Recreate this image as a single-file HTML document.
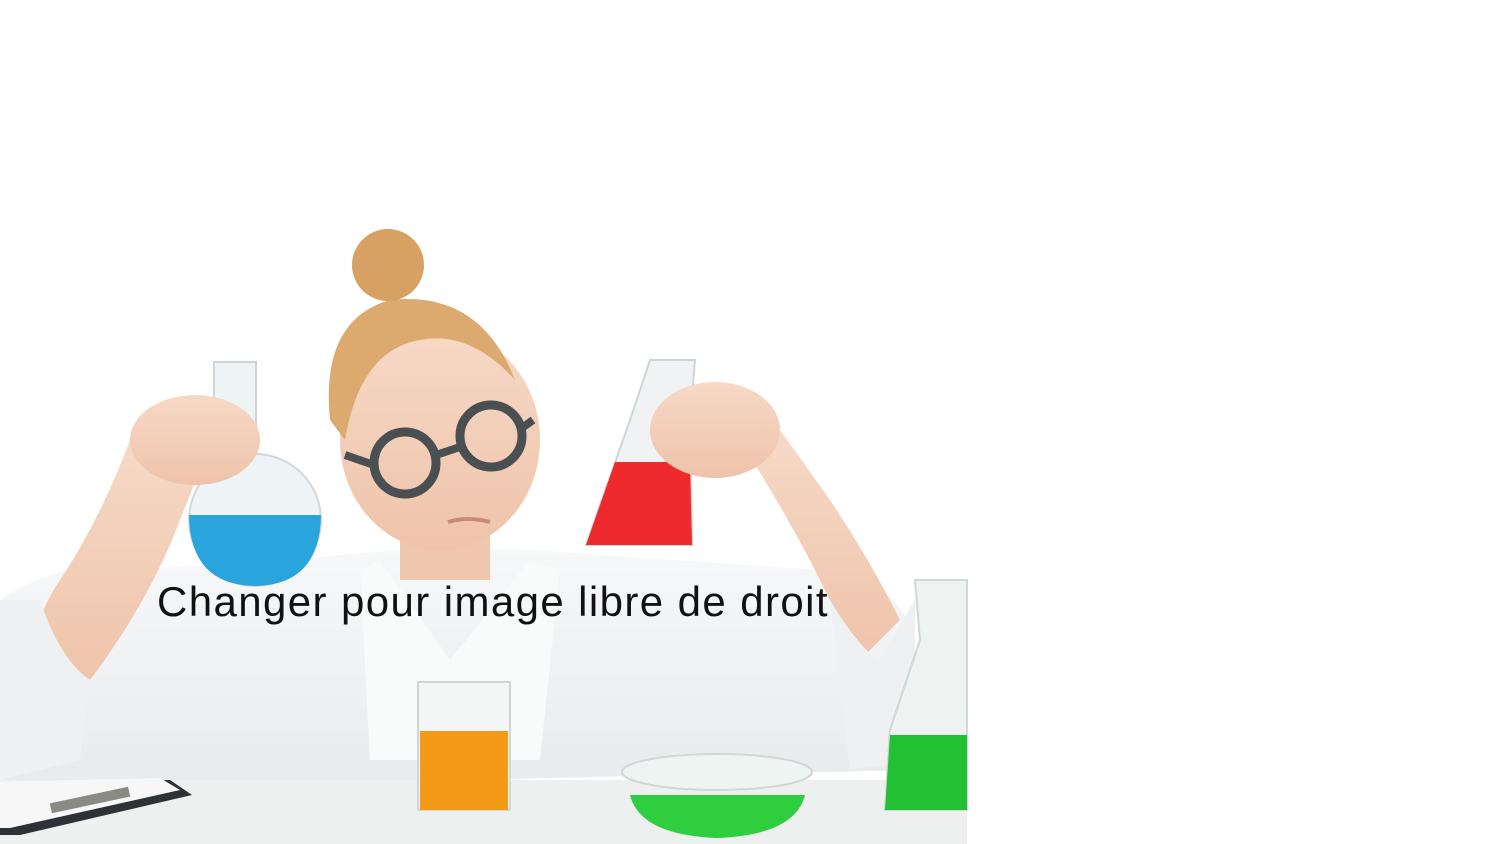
<!DOCTYPE html>
<html><head><meta charset="utf-8"><style>
html,body{margin:0;padding:0;background:#fff;width:1500px;height:844px;overflow:hidden}
svg{position:absolute;left:0;top:0}
.t{position:absolute;left:157px;top:578px;font-family:"Liberation Sans",sans-serif;font-size:42px;color:#111;white-space:nowrap;letter-spacing:1.4px}
</style></head><body>
<svg width="1500" height="844" viewBox="0 0 1500 844">
<defs>
<linearGradient id="coat" x1="0" y1="0" x2="0" y2="1"><stop offset="0" stop-color="#f7f8f9"/><stop offset="1" stop-color="#e8eaec"/></linearGradient>
<linearGradient id="skin" x1="0" y1="0" x2="0" y2="1"><stop offset="0" stop-color="#f6d9c6"/><stop offset="1" stop-color="#efc3aa"/></linearGradient>
</defs>
<path d="M0 600 Q60 560 120 570 L300 560 Q440 540 600 555 L820 570 Q900 580 915 640 L915 770 L0 790 Z" fill="url(#coat)"/>
<path d="M130 440 Q100 520 60 580 Q20 640 40 690 L90 680 Q150 600 180 520 L200 470 Z" fill="url(#skin)"/>
<path d="M740 440 Q790 520 820 580 Q850 640 860 660 L900 620 Q870 560 830 500 L780 430 Z" fill="url(#skin)"/>
<path d="M0 600 L40 600 Q60 660 90 680 L80 760 L0 780 Z" fill="#eef0f2"/>
<path d="M830 600 Q860 650 880 660 L915 600 L915 760 L850 770 Z" fill="#eef0f2"/>
<rect x="400" y="520" width="90" height="60" fill="#efc6ae"/>
<path d="M380 560 L450 660 L530 560 L560 570 L540 760 L370 760 L360 570 Z" fill="#f9fafa"/>
<ellipse cx="440" cy="440" rx="100" ry="110" fill="url(#skin)"/>
<path d="M330 420 Q320 320 390 300 Q480 290 515 380 Q470 330 420 340 Q360 350 345 440 Z" fill="#dcaa6e"/>
<circle cx="388" cy="265" r="36" fill="#d6a162"/>
<circle cx="405" cy="463" r="31" fill="none" stroke="#4a4f52" stroke-width="9"/>
<circle cx="491" cy="436" r="31" fill="none" stroke="#4a4f52" stroke-width="9"/>
<path d="M436 455 L460 447 M374 465 L345 455 M522 428 L533 420" stroke="#4a4f52" stroke-width="8"/>
<path d="M448 522 Q468 516 490 522" stroke="#c88b7a" stroke-width="4" fill="none"/>
<rect x="214" y="362" width="42" height="110" fill="#eef3f5" stroke="#ccd6da" stroke-width="2"/>
<circle cx="255" cy="520" r="66" fill="#eef3f6" stroke="#cfd8dc" stroke-width="2"/>
<path d="M189 515 L321 515 Q320 585 255 586 Q190 585 189 515 Z" fill="#29a4dc"/>
<ellipse cx="195" cy="440" rx="65" ry="45" fill="url(#skin)"/>
<path d="M650 360 L695 360 L690 420 L692 545 L586 545 L630 420 Z" fill="#f0f2f3" stroke="#cfd6d8" stroke-width="2"/>
<path d="M615 462 L690 462 L692 545 L586 545 Z" fill="#ee2a2c"/>
<ellipse cx="715" cy="430" rx="65" ry="48" fill="url(#skin)"/>
<rect x="0" y="780" width="967" height="64" fill="#eef0f0"/>
<path d="M0 785 L170 780 L192 795 L20 835 L0 835 Z" fill="#2e3236"/>
<path d="M0 782 L160 778 L180 790 L10 828 L0 828 Z" fill="#f7f7f7"/>
<rect x="50" y="795" width="80" height="10" fill="#8a8a84" transform="rotate(-12 90 800)"/>
<rect x="418" y="682" width="92" height="128" fill="#f4f6f6" stroke="#cfd6d8" stroke-width="2"/>
<rect x="420" y="731" width="88" height="79" fill="#f59a16"/>
<ellipse cx="717" cy="772" rx="95" ry="18" fill="#eef4f2" stroke="#cfd8d6" stroke-width="2"/>
<path d="M630 795 Q640 835 717 838 Q795 835 805 795 Z" fill="#2fce3e"/>
<path d="M915 580 L967 580 L967 810 L885 810 L890 730 L920 640 Z" fill="#eef3f2" stroke="#cfd8d6" stroke-width="2"/>
<path d="M890 735 L967 735 L967 810 L885 810 Z" fill="#22c033"/>
</svg>
<div class="t">Changer pour image libre de droit</div>
</body></html>
